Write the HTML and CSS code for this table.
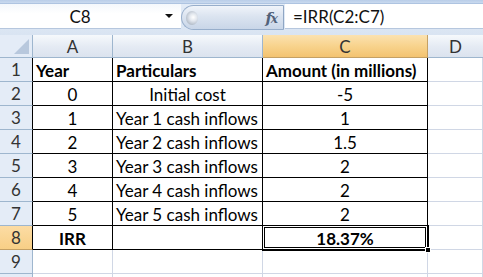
FILE: index.html
```html
<!DOCTYPE html>
<html>
<head>
<meta charset="utf-8">
<link rel="stylesheet" href="styles.css">
</head>
<body>
<div class="app">
  <div class="fbar">
    <div class="namebox">
      <span class="nb-text">C8</span>
      <span class="nb-arrow"></span>
    </div>
    <div class="cap">
      <span class="grip"></span>
      <span class="fx">f<span class="fx-x">x</span></span>
    </div>
    <div class="finput">=IRR(C2:C7)</div>
  </div>
  <div class="sheet">
    <div class="hd corner"><span class="tri"></span></div>
    <div class="hd col">A</div>
    <div class="hd col">B</div>
    <div class="hd col sel">C</div>
    <div class="hd col last">D</div>

    <div class="rh tb">1</div>
    <div class="c t b left">Year</div>
    <div class="c t b left">Particulars</div>
    <div class="c t b left">Amount (in millions)</div>
    <div class="c"></div>

    <div class="rh tb">2</div>
    <div class="c t">0</div>
    <div class="c t">Initial cost</div>
    <div class="c t">-5</div>
    <div class="c"></div>

    <div class="rh tb">3</div>
    <div class="c t">1</div>
    <div class="c t left">Year 1 cash inflows</div>
    <div class="c t">1</div>
    <div class="c"></div>

    <div class="rh tb">4</div>
    <div class="c t">2</div>
    <div class="c t left">Year 2 cash inflows</div>
    <div class="c t">1.5</div>
    <div class="c"></div>

    <div class="rh tb">5</div>
    <div class="c t">3</div>
    <div class="c t left">Year 3 cash inflows</div>
    <div class="c t">2</div>
    <div class="c"></div>

    <div class="rh tb">6</div>
    <div class="c t">4</div>
    <div class="c t left">Year 4 cash inflows</div>
    <div class="c t">2</div>
    <div class="c"></div>

    <div class="rh tb">7</div>
    <div class="c t">5</div>
    <div class="c t left">Year 5 cash inflows</div>
    <div class="c t">2</div>
    <div class="c"></div>

    <div class="rh tb selrow">8</div>
    <div class="c t b">IRR</div>
    <div class="c t"></div>
    <div class="c t b active">18.37%<span class="handle"></span></div>
    <div class="c"></div>

    <div class="rh">9</div>
    <div class="c"></div>
    <div class="c"></div>
    <div class="c"></div>
    <div class="c"></div>

    <div class="rh stub"></div>
    <div class="c stub"></div>
    <div class="c stub"></div>
    <div class="c stub"></div>
    <div class="c stub"></div>
  </div>
</div>
</body>
</html>
```

FILE: styles.css
```css
* { box-sizing: border-box; }
html, body { margin: 0; padding: 0; background: #ffffff; }
body { font-family: Lato, "Open Sans", sans-serif; overflow: hidden; width: 483px; height: 277px; }

.app { width: 483px; height: 277px; overflow: hidden; }

.fbar {
  height: 35px;
  display: flex;
  align-items: flex-start;
  padding-top: 4px;
  background: linear-gradient(#b9cde8 0, #c9daef 3px, #aec4e1 3px, #aec4e1 4px, #e3ecf7 4px, #d9e4f2 100%);
}

.namebox {
  width: 181px;
  height: 25px;
  background: linear-gradient(#f4f8fc, #ffffff 40%);
  border-bottom: 1px solid #b6c7de;
  display: flex;
  align-items: center;
}
.nb-text {
  width: 160px;
  text-align: center;
  font-size: 17px;
  color: #111;
}
.nb-arrow {
  width: 0; height: 0;
  margin-left: 5px;
  border-left: 4px solid transparent;
  border-right: 4px solid transparent;
  border-top: 4px solid #111;
}

.cap {
  width: 103px;
  height: 25px;
  margin-top: 1px;
  border-radius: 13px 0 0 13px;
  border: 1px solid #97aecb;
  border-right: 1px solid #8fa6c4;
  background: linear-gradient(#f0f4fa, #dbe4f0 45%, #c9d6e8 100%);
  display: flex;
  align-items: center;
  justify-content: space-between;
  padding: 0 6px 0 4px;
}
.grip {
  width: 12px; height: 14px;
  border-radius: 50%;
  background: radial-gradient(circle at 60% 45%, #ffffff 0, #e2e7ee 35%, #9ea9b7 90%);
}
.fx {
  font-family: "DejaVu Serif", "Liberation Serif", serif;
  font-style: italic;
  font-weight: 700;
  font-size: 15px;
  color: #52627a;
  letter-spacing: -1px;
}
.fx-x { font-size: 12px; }

.finput {
  flex: 1;
  height: 25px;
  margin-left: 1px;
  background: #ffffff;
  border-bottom: 1px solid #b6c7de;
  font-size: 17px;
  line-height: 25px;
  padding-left: 8px;
  color: #111;
}

.sheet {
  display: grid;
  grid-template-columns: 33px 80px 150px 165px 55px;
  grid-template-rows: 23px repeat(9, 24px) 3px;
  font-size: 17px;
  color: #000;
}

.hd {
  background: linear-gradient(#f6f9fc, #e4eaf3 55%, #dbe3ee);
  border-right: 1px solid #9eb6ce;
  border-bottom: 1px solid #9eb6ce;
  color: #333;
  display: flex;
  align-items: center;
  justify-content: center;
  font-size: 17px;
}
.hd.last { border-right: none; }
.hd.sel {
  background: linear-gradient(#fbe2b0, #f8d38d 50%, #f3c370);
  border-bottom-color: #c4a064;
  border-right-color: #c4a064;
}
.corner {
  position: relative;
  background: #e4ecf7;
}
.tri {
  position: absolute;
  right: 3px; bottom: 3px;
  width: 0; height: 0;
  border-left: 15px solid transparent;
  border-bottom: 15px solid #b8c8dd;
}

.rh {
  background: #e4ecf7;
  border-right: 1px solid #9eb6ce;
  border-bottom: 1px solid #9eb6ce;
  color: #333;
  display: flex;
  align-items: center;
  justify-content: center;
  font-size: 17px;
}
.rh.tb { border-right-color: #000; }
.rh.selrow {
  background: linear-gradient(#fcdca4, #f8cf86);
  border-bottom-color: #c4a064;
}

.c {
  border-right: 1px solid #d0d7e5;
  border-bottom: 1px solid #d0d7e5;
  display: flex;
  align-items: center;
  justify-content: center;
  padding: 1px 3px 0;
  white-space: nowrap;
  overflow: visible;
}
.c.t { border-right-color: #000; border-bottom-color: #000; }
.c.b { font-weight: 700; }
.c.left { justify-content: flex-start; }
.stub { border-bottom: none; }

.active {
  position: relative;
  box-shadow: inset 0 0 0 1px #ffffff, inset 0 0 0 2px #000;
  outline: 1px solid #000;
}
.handle {
  position: absolute;
  right: -4px; bottom: -4px;
  width: 6px; height: 6px;
  background: #000;
  border: 1px solid #fff;
}
```
